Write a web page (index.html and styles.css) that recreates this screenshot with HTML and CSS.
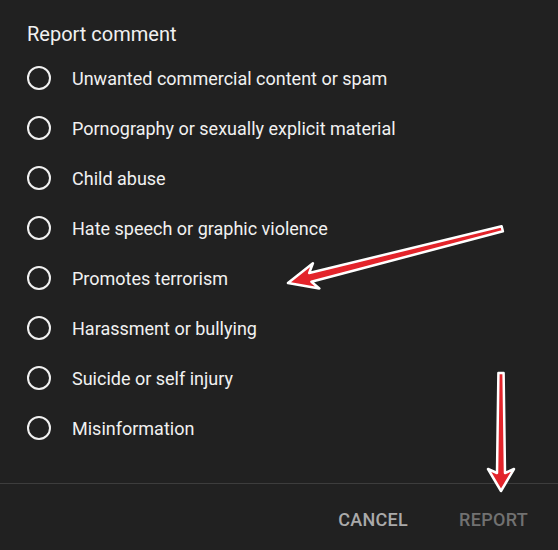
FILE: index.html
```html
<!DOCTYPE html>
<html lang="en">
<head>
  <meta charset="UTF-8">
  <meta name="viewport" content="width=device-width, initial-scale=1.0">
  <title>Report comment</title>
  <link rel="stylesheet" href="styles.css">
</head>
<body>
  <div class="dialog">
    <h1 class="dialog-title">Report comment</h1>

    <ul class="option-list">
      <li class="option"><span class="radio"></span>Unwanted commercial content or spam</li>
      <li class="option"><span class="radio"></span>Pornography or sexually explicit material</li>
      <li class="option"><span class="radio"></span>Child abuse</li>
      <li class="option"><span class="radio"></span>Hate speech or graphic violence</li>
      <li class="option"><span class="radio"></span>Promotes terrorism</li>
      <li class="option"><span class="radio"></span>Harassment or bullying</li>
      <li class="option"><span class="radio"></span>Suicide or self injury</li>
      <li class="option"><span class="radio"></span>Misinformation</li>
    </ul>

    <div class="dialog-footer">
      <button class="btn btn-cancel">Cancel</button>
      <button class="btn btn-report" disabled>Report</button>
    </div>
  </div>

  <!-- annotation arrows drawn over the dialog -->
  <svg class="arrows" width="558" height="550" viewBox="0 0 558 550" xmlns="http://www.w3.org/2000/svg">
    <g transform="translate(288,283) rotate(-14.2)">
      <polygon points="0,0 29,-13 23,-4.5 221,-2.6 221,2.6 23,4.5 29,13" />
    </g>
    <g transform="translate(501,491) rotate(-90)">
      <polygon points="0,0 22,-13 18,-4 118,-2.6 118,2.6 18,4 22,13" />
    </g>
  </svg>
</body>
</html>
```

FILE: styles.css
```css
body {
  font-family: Roboto, "Liberation Sans", Arial, sans-serif;
  margin: 0;
  padding: 0;
  background-color: #212121;
  color: #f1f1f1;
  overflow: hidden;
}

.dialog {
  width: 558px;
  height: 550px;
  display: flex;
  flex-direction: column;
}

.dialog-title {
  font-size: 20px;
  font-weight: 400;
  line-height: 28px;
  margin: 0;
  padding: 20px 27px 0;
  color: #f1f1f1;
}

.option-list {
  list-style: none;
  margin: 0;
  padding: 5px 0 0 27px;
}

.option {
  display: flex;
  align-items: center;
  height: 50px;
  font-size: 18px;
}

.radio {
  width: 20px;
  height: 20px;
  border: 2.5px solid #f1f1f1;
  border-radius: 50%;
  margin-right: 21px;
  flex-shrink: 0;
}

.dialog-footer {
  margin-top: 30px;
  border-top: 1px solid #3d3d3d;
  flex: 1;
  display: flex;
  justify-content: flex-end;
  align-items: center;
  gap: 51px;
  padding: 5px 30px 0 0;
}

.btn {
  background: none;
  border: 0;
  padding: 0;
  font-family: inherit;
  font-size: 18px;
  font-weight: 500;
  letter-spacing: 0.3px;
  text-transform: uppercase;
}

.btn-cancel {
  color: #aaaaaa;
}

.btn-report {
  color: #717171;
}

.arrows {
  position: absolute;
  left: 0;
  top: 0;
  pointer-events: none;
}

.arrows polygon {
  fill: #e3242b;
  stroke: #ffffff;
  stroke-width: 2.5;
  stroke-linejoin: round;
}
```
